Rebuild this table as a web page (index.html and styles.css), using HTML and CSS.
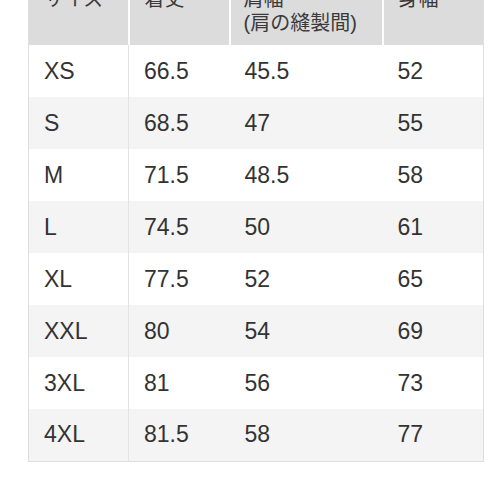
FILE: index.html
```html
<!DOCTYPE html>
<html lang="ja">
<head>
<meta charset="utf-8">
<link rel="stylesheet" href="styles.css">
</head>
<body>
<table class="size-table">
  <thead>
    <tr>
      <th class="c1">サイズ</th>
      <th class="c2">着丈</th>
      <th class="c3">肩幅<br>(肩の縫製間)</th>
      <th class="c4">身幅</th>
    </tr>
  </thead>
  <tbody>
    <tr><td>XS</td><td>66.5</td><td>45.5</td><td>52</td></tr>
    <tr><td>S</td><td>68.5</td><td>47</td><td>55</td></tr>
    <tr><td>M</td><td>71.5</td><td>48.5</td><td>58</td></tr>
    <tr><td>L</td><td>74.5</td><td>50</td><td>61</td></tr>
    <tr><td>XL</td><td>77.5</td><td>52</td><td>65</td></tr>
    <tr><td>XXL</td><td>80</td><td>54</td><td>69</td></tr>
    <tr><td>3XL</td><td>81</td><td>56</td><td>73</td></tr>
    <tr><td>4XL</td><td>81.5</td><td>58</td><td>77</td></tr>
  </tbody>
</table>
</body>
</html>
```
FILE: styles.css
```css
html, body {
  margin: 0;
  padding: 0;
  background: #ffffff;
}
body {
  font-family: "Liberation Sans", Arial, "Noto Sans CJK JP", sans-serif;
  color: #333333;
}
.size-table {
  margin: -30px 0 0 28px;
  width: 456px;
  border-collapse: collapse;
  table-layout: fixed;
  border: 1px solid #dedede;
}
.size-table th {
  background: #dcdcdc;
  font-weight: normal;
  font-size: 20px;
  line-height: 24px;
  text-align: left;
  vertical-align: top;
  height: 74px;
  box-sizing: border-box;
  padding: 16px 0 10px 15px;
  border-right: 2px solid #ffffff;
  font-family: "Liberation Sans", "Noto Sans CJK JP", sans-serif;
  color: #3a3a3a;
}
.size-table th:last-child {
  border-right: none;
}
.size-table .c1 { width: 100px; }
.size-table .c2 { width: 101px; }
.size-table .c3 { width: 153px; }
.size-table th.c3 { padding-left: 13px; }
.size-table td {
  height: 52px;
  box-sizing: border-box;
  padding: 0 0 0 15px;
  font-size: 23px;
  vertical-align: middle;
}
.size-table td:first-child {
  border-right: 1px solid #e3e3e3;
}
.size-table tbody tr:nth-child(odd) td {
  background: #ffffff;
}
.size-table tbody tr:nth-child(even) td {
  background: #f4f4f4;
}
```
